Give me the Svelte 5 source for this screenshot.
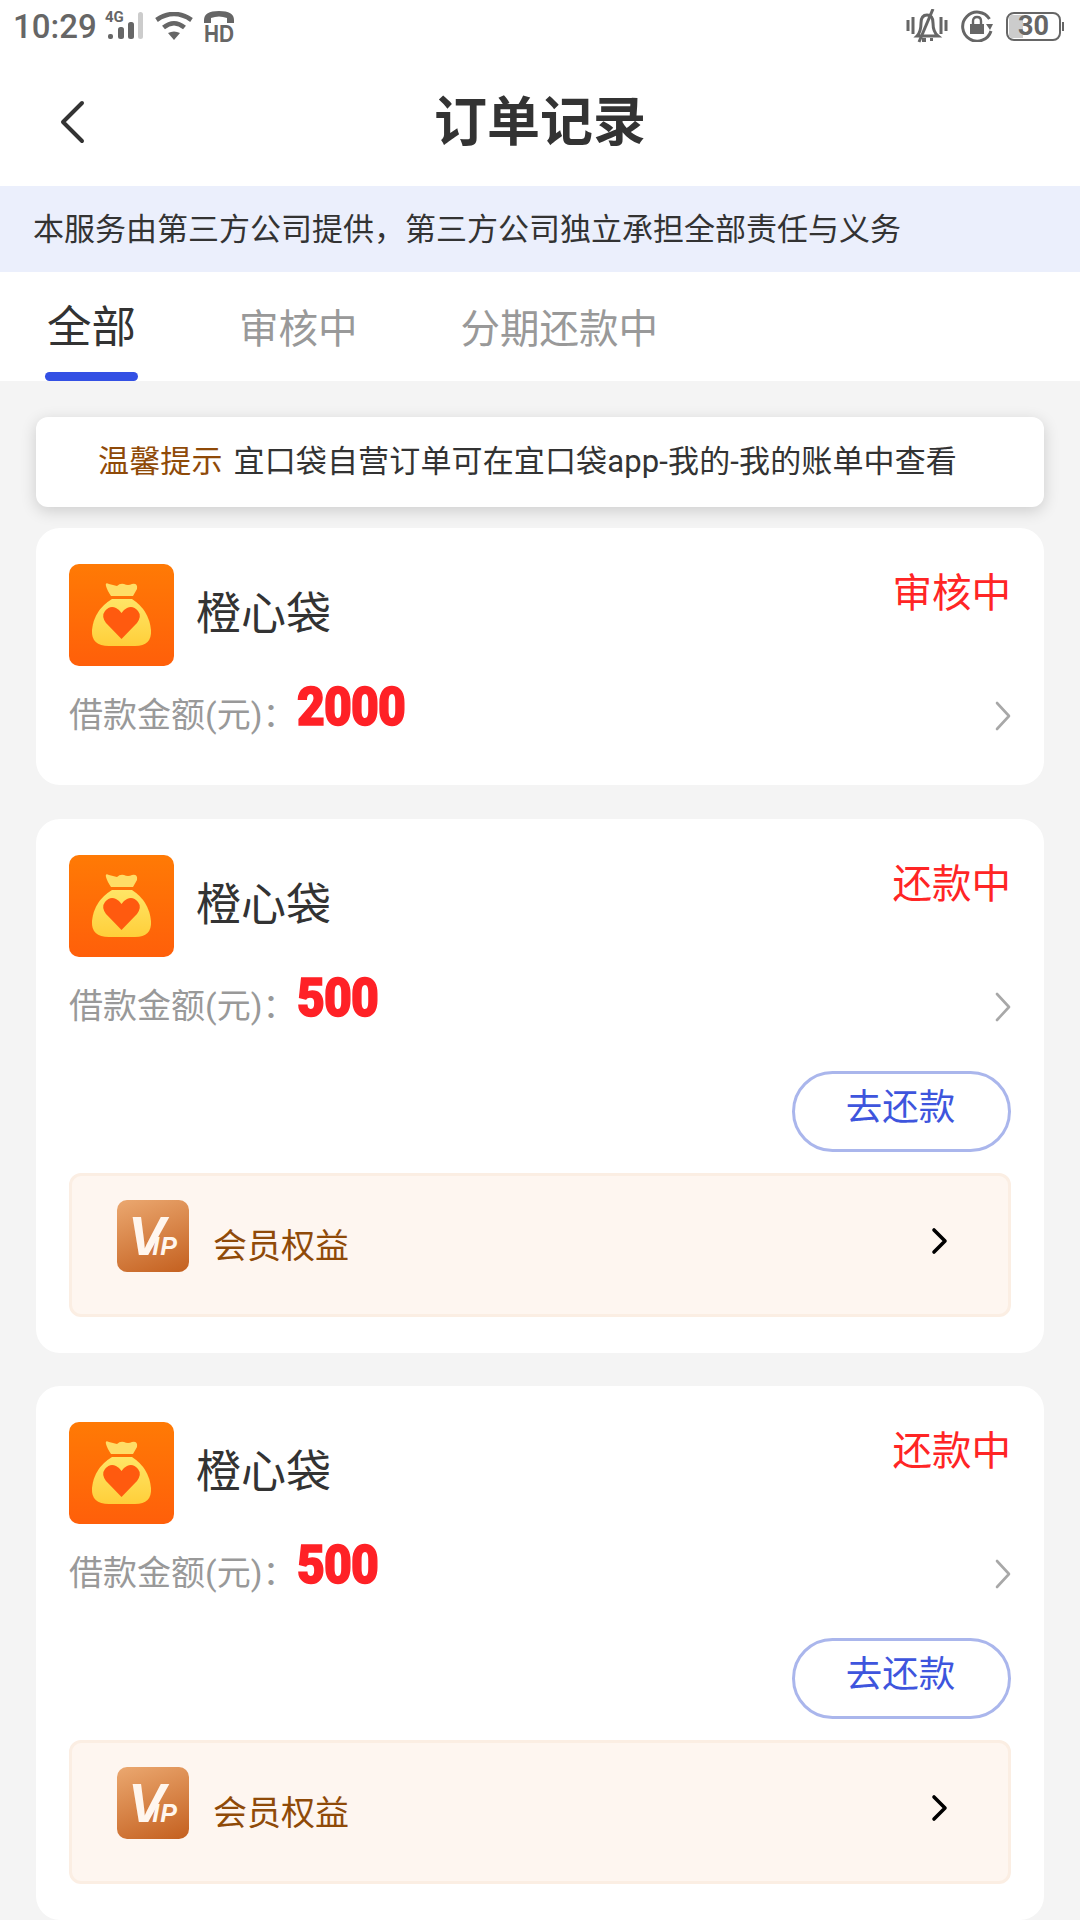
<!--
  App.svelte
  Order list screen: status bar, header, notice banner, tabs, order cards.
-->
<script lang="ts">
  type Order = { status: string; amount: string; repay: boolean };

  const orders: Order[] = [
    { status: '审核中', amount: '2000', repay: false },
    { status: '还款中', amount: '500', repay: true },
    { status: '还款中', amount: '500', repay: true },
  ];

  const tabs = ['全部', '审核中', '分期还款中'];
</script>

<div class="page">
  <div class="statusbar">
    <div class="status-left">
      <span class="time">10:29</span>
      <svg class="free" viewBox="0 0 38 28" width="38" height="28" aria-hidden="true">
        <text x="-1" y="10" class="net">4G</text>
        <rect x="2" y="22" width="5" height="5" rx="2" fill="#666" />
        <rect x="12" y="15" width="6" height="12" rx="2.5" fill="#666" />
        <rect x="22" y="10" width="6" height="17" rx="2.5" fill="#666" />
        <rect x="32" y="0" width="5" height="27" rx="2.5" fill="#ccc" />
      </svg>
      <svg viewBox="0 0 38 28" width="38" height="28" aria-hidden="true">
        <path d="M1.500 8 Q19 -4 36.500 8" fill="none" stroke="#666" stroke-width="4.600" />
        <path d="M8.500 15.500 Q19 7 29.500 15.500" fill="none" stroke="#666" stroke-width="4.600" />
        <path d="M13 21 Q19 18 25 21 L19 28 Z" fill="#666" />
      </svg>
      <svg class="free" viewBox="0 0 30 31" width="30" height="31" aria-hidden="true">
        <path d="M0 9 Q0 0 15 0 Q30 0 30 9 L30 12 L23 12 L23 7 Q15 4 7 7 L7 12 L0 12 Z" fill="#666" />
        <text x="0" y="31" textLength="30" lengthAdjust="spacingAndGlyphs" class="hdtext">HD</text>
      </svg>
    </div>
    <div class="status-right">
      <svg viewBox="0 0 42 34" width="42" height="34" aria-hidden="true">
        <g fill="none" stroke="#666" stroke-width="3">
          <path d="M2 11 V22 M7 8 V25 M35 8 V25 M40 11 V22" />
          <path d="M11 27 Q15 23 15 14 Q15 6 21 6 Q27 6 27 14 Q27 23 32 27 Z" />
          <path d="M27 0 L13 33" />
        </g>
        <path d="M16 29 H20 V33 H16 Z M24 29 H27 V32 H24 Z" fill="#666" />
      </svg>
      <svg viewBox="0 0 32 32" width="32" height="32" aria-hidden="true">
        <path d="M30 21 A14.500 14.500 0 1 1 28.500 9" fill="none" stroke="#666" stroke-width="3" />
        <path d="M25 14 L32 14 L29 20 Z" fill="#666" />
        <rect x="9" y="14" width="14" height="10" fill="#666" />
        <path d="M12 14 V11 Q12 7 16 7 Q20 7 20 11 V14" fill="none" stroke="#666" stroke-width="2.400" />
      </svg>
      <div class="battery">
        <div class="battery-body">
          <div class="battery-fill"></div>
          <span class="battery-num">30</span>
        </div>
        <div class="battery-tip"></div>
      </div>
    </div>
  </div>

  <header class="header">
    <svg class="back" viewBox="0 0 28 44" width="28" height="44" aria-hidden="true">
      <path d="M24 3 L5 22 L24 41" fill="none" stroke="#333" stroke-width="4" stroke-linecap="round" stroke-linejoin="round" />
    </svg>
    <h1 class="title">订单记录</h1>
  </header>

  <div class="banner"><span>本服务由第三方公司提供，第三方公司独立承担全部责任与义务</span></div>

  <nav class="tabs">
    {#each tabs as tab, i}
      <div class="tab" class:active={i === 0}>
        <span>{tab}</span>
        {#if i === 0}<i class="tab-line"></i>{/if}
      </div>
    {/each}
  </nav>

  <main class="list">
    <div class="notice">
      <span class="notice-tag">温馨提示</span>
      <span>宜口袋自营订单可在宜口袋app-我的-我的账单中查看</span>
    </div>

    {#each orders as order}
      <section class="card" class:repaying={order.repay}>
        <div class="card-top">
          <div class="product">
            <svg class="bag" viewBox="0 0 105 102" width="105" height="102" aria-hidden="true">
              <defs>
                <linearGradient id="bagBg" x1="0" y1="0" x2="0" y2="1">
                  <stop offset="0" stop-color="#ff7a05" />
                  <stop offset="1" stop-color="#ff5f0a" />
                </linearGradient>
                <linearGradient id="bagBody" x1="0" y1="0" x2="0" y2="1">
                  <stop offset="0" stop-color="#ffe566" />
                  <stop offset="1" stop-color="#ffcf3a" />
                </linearGradient>
              </defs>
              <rect width="105" height="102" rx="10" fill="url(#bagBg)" />
              <path d="M37 22 Q36 18 40 20 L48 22 Q51 19 55 20 Q59 22 63 20 Q69 19 68 25 L64 32 L42 32 Q38 26 37 22 Z" fill="#ffdd66" />
              <path d="M43 35 L63 35 Q80 46 82 66 Q83 82 66 82 L40 82 Q22 82 23 66 Q25 46 43 35 Z" fill="url(#bagBody)" />
              <path d="M52.500 75 L37 59 Q32 52 36 47 Q41 41 47 44 Q51 46 52.500 49 Q54 46 58 44 Q64 41 69 47 Q73 52 68 59 Z" fill="#ff5a0f" />
            </svg>
            <span class="name">橙心袋</span>
          </div>
          <span class="status">{order.status}</span>
        </div>

        <div class="amount-row">
          <span class="label">借款金额(元)：</span>
          <span class="amount">{order.amount}</span>
          <svg class="chev" viewBox="0 0 18 30" width="18" height="30" aria-hidden="true">
            <path d="M3 2 L15 15 L3 28" fill="none" stroke="#a8a8a8" stroke-width="2.600" stroke-linecap="round" stroke-linejoin="round" />
          </svg>
        </div>

        {#if order.repay}
          <div class="actions">
            <button class="repay">去还款</button>
          </div>
          <div class="vip">
            <div class="vip-left">
              <div class="vip-icon"><span class="vip-v">V</span><span class="vip-ip">IP</span></div>
              <span class="vip-text">会员权益</span>
            </div>
            <svg class="vip-chev" viewBox="0 0 18 28" width="18" height="28" aria-hidden="true">
              <path d="M3 3 L14 14 L3 25" fill="none" stroke="#000" stroke-width="3.600" stroke-linecap="round" stroke-linejoin="round" />
            </svg>
          </div>
        {/if}
      </section>
    {/each}
  </main>
</div>

<style>
  :global(body) {
    margin: 0;
    background: #f4f4f4;
  }

  .page {
    width: 1080px;
    height: 1920px;
    overflow: hidden;
    background: #f4f4f4;
    font-family: Roboto, "Noto Sans CJK SC", sans-serif;
  }

  .statusbar {
    height: 52px;
    padding: 0 16px 3px 13px;
    background: #fff;
    display: flex;
    align-items: center;
    justify-content: space-between;
  }

  .status-left,
  .status-right {
    display: flex;
    align-items: center;
  }

  .status-left {
    gap: 11px;
  }

  .status-right {
    gap: 13px;
  }

  .time {
    font-size: 33px;
    font-weight: 500;
    color: #666;
    margin-right: -2px;
  }

  .free {
    overflow: visible;
  }

  .net {
    font: 700 15px Roboto, sans-serif;
    fill: #666;
  }

  .hdtext {
    font: 700 24px "Liberation Sans", sans-serif;
    fill: #666;
  }

  .battery {
    display: flex;
    align-items: center;
    gap: 1px;
  }

  .battery-body {
    width: 55px;
    height: 29px;
    box-sizing: border-box;
    border: 2.500px solid #666;
    border-radius: 8px;
    position: relative;
    display: flex;
    align-items: center;
    justify-content: center;
    overflow: hidden;
  }

  .battery-fill {
    position: absolute;
    left: 1px;
    top: 1px;
    bottom: 1px;
    width: 14px;
    background: #ccc;
  }

  .battery-num {
    position: relative;
    font-size: 27px;
    font-weight: 700;
    color: #666;
  }

  .battery-tip {
    width: 2px;
    height: 9px;
    background: #666;
  }

  .header {
    height: 131px;
    background: #fff;
    position: relative;
    display: flex;
    align-items: center;
    justify-content: center;
  }

  .back {
    position: absolute;
    left: 58px;
    top: 45px;
  }

  .title {
    margin: 0;
    font-size: 53px;
    font-weight: 700;
    color: #333;
    position: relative;
    top: -3px;
  }

  .banner {
    height: 86px;
    padding-left: 33px;
    display: flex;
    align-items: center;
    background: #ebeffc;
    font-size: 31px;
    color: #333;
  }

  .banner span {
    position: relative;
    top: -3px;
  }

  .tabs {
    height: 109px;
    background: #fff;
    display: flex;
    padding-left: 47px;
    gap: 103px;
  }

  .tab {
    position: relative;
    font-size: 39.500px;
    color: #999;
    padding-top: 28px;
    line-height: 60px;
  }

  .tab.active {
    font-size: 44.500px;
    color: #333;
    padding-top: 26px;
  }

  .tab-line {
    position: absolute;
    left: -2px;
    right: -2px;
    bottom: 0;
    height: 9px;
    border-radius: 5px;
    background: #3350e4;
  }

  .list {
    padding: 36px 36px 0;
  }

  .notice {
    height: 90px;
    box-sizing: border-box;
    padding: 0 0 7px 62px;
    margin-bottom: 21px;
    display: flex;
    align-items: center;
    gap: 11px;
    background: #fff;
    border-radius: 12px;
    box-shadow: 0 4px 16px rgba(0, 0, 0, 0.16);
    font-size: 31px;
    letter-spacing: 0.14px;
    color: #333;
  }

  .notice-tag {
    color: #8f4a08;
  }

  .card {
    position: relative;
    background: #fff;
    border-radius: 24px;
    padding: 36px 33px;
    margin-bottom: 34px;
  }

  .card.repaying {
    margin-bottom: 33px;
  }

  .card-top {
    display: flex;
    justify-content: space-between;
    align-items: flex-start;
  }

  .product {
    display: flex;
    align-items: center;
    gap: 22px;
  }

  .bag {
    display: block;
  }

  .name {
    font-size: 45px;
    color: #333;
    position: relative;
    top: -5px;
  }

  .status {
    font-size: 39.500px;
    line-height: 56px;
    color: #ff2525;
    margin-top: 2px;
  }

  .amount-row {
    position: relative;
    display: flex;
    align-items: center;
    height: 73px;
    margin-top: 10px;
  }

  .label {
    font-size: 34px;
    color: #999;
  }

  .amount {
    font-size: 54px;
    font-weight: 900;
    color: #ff2126;
    letter-spacing: -1px;
    transform: scaleX(0.89);
    transform-origin: left center;
    position: relative;
    top: -6px;
    margin-left: 1px;
    -webkit-text-stroke: 1.500px #ff2126;
  }

  .chev {
    position: absolute;
    right: -1px;
    top: 25px;
  }

  .actions {
    display: flex;
    justify-content: flex-end;
    margin-top: 31px;
  }

  .repay {
    width: 219px;
    height: 81px;
    box-sizing: border-box;
    border: 3px solid #aab6ec;
    border-radius: 41px;
    background: #fff;
    color: #3e55dd;
    font-family: inherit;
    font-size: 36.500px;
    padding: 0 2px 14px 0;
  }

  .vip {
    margin-top: 21px;
    height: 144px;
    box-sizing: border-box;
    padding: 0 59px 0 45px;
    display: flex;
    align-items: center;
    justify-content: space-between;
    background: #fef6f0;
    border: 3px solid #fbeee3;
    border-radius: 12px;
  }

  .vip-left {
    display: flex;
    align-items: center;
    gap: 24px;
  }

  .vip-icon {
    width: 72px;
    height: 72px;
    box-sizing: border-box;
    padding: 1px 0 0 11px;
    margin-top: -19px;
    border-radius: 10px;
    background: linear-gradient(160deg, #eba870, #c4601f);
    display: flex;
    align-items: baseline;
    overflow: hidden;
    color: #fff6ee;
    font-family: "Liberation Sans", sans-serif;
    font-style: italic;
    font-weight: 700;
    line-height: 70px;
  }

  .vip-v {
    font-size: 56px;
    letter-spacing: -13px;
  }

  .vip-ip {
    font-size: 25px;
    letter-spacing: 1px;
  }

  .vip-text {
    font-size: 34px;
    color: #8f4a08;
    position: relative;
    top: -2px;
  }

  .vip-chev {
    margin-top: -9px;
  }
</style>
